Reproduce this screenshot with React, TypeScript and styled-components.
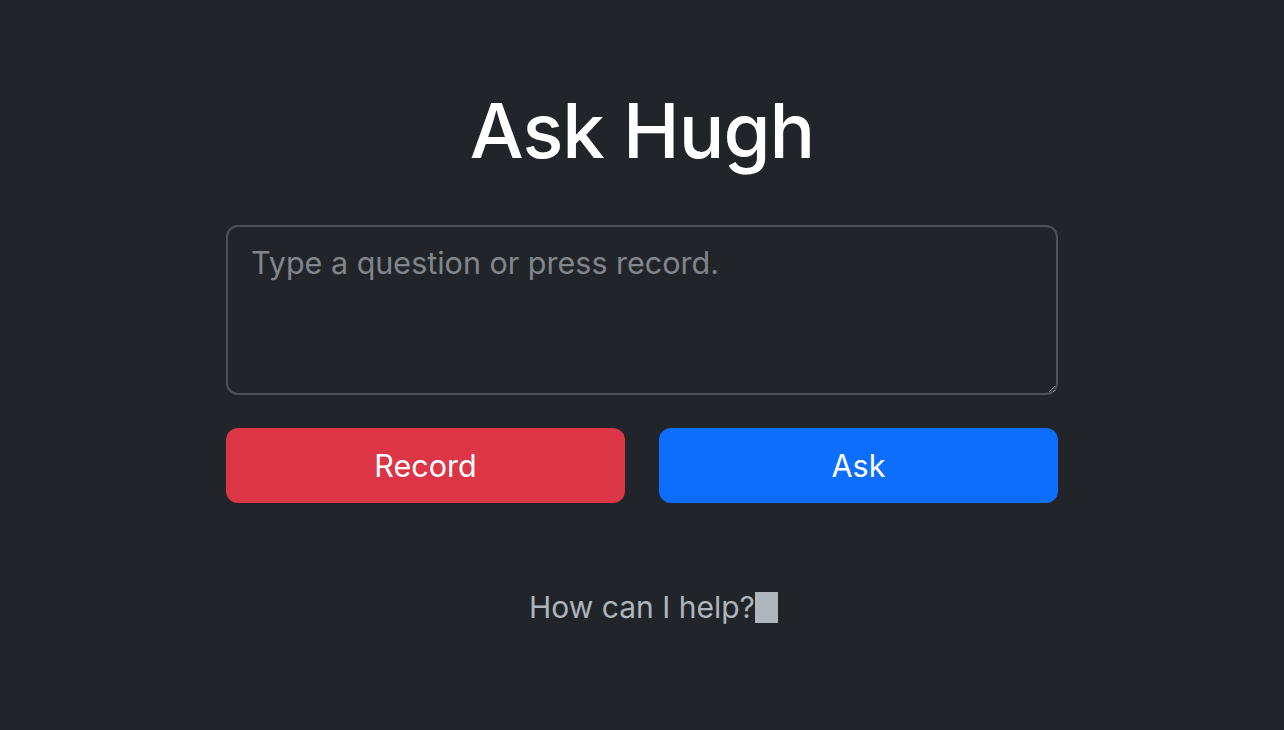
import styled, { createGlobalStyle } from "styled-components";
import React, { useState } from "react";

const GlobalStyle = createGlobalStyle`
  html, body {
    margin: 0;
    padding: 0;
    background: #212529;
  }
  body {
    font-family: Inter, "Noto Sans", "Liberation Sans", sans-serif;
    color: #ffffff;
  }
`;

const Page = styled.main`
  min-height: 730px;
  display: flex;
  flex-direction: column;
  align-items: center;
  padding-top: 82px;
  box-sizing: border-box;
`;

const Title = styled.h1`
  margin: 0;
  font-size: 76px;
  line-height: 96px;
  font-weight: 500;
  letter-spacing: -1px;
  color: #ffffff;
`;

const Form = styled.div`
  width: 832px;
  margin-top: 47px;
  display: flex;
  flex-direction: column;
  gap: 33px;
`;

const Question = styled.textarea`
  width: 100%;
  height: 170px;
  box-sizing: border-box;
  padding: 13px 23px;
  background: #212529;
  color: #dee2e6;
  color-scheme: dark;
  border: 2px solid #4c5258;
  border-radius: 12px;
  font-family: inherit;
  font-size: 30.5px;
  line-height: 1.5;
  resize: vertical;
  outline: none;
  &::placeholder {
    color: #80868c;
  }
`;

const ButtonRow = styled.div`
  display: grid;
  grid-template-columns: 1fr 1fr;
  gap: 34px;
`;

const ActionButton = styled.button<{ $tone: "danger" | "primary" }>`
  height: 75px;
  border: none;
  border-radius: 12px;
  background: ${(p) => (p.$tone === "danger" ? "#dc3545" : "#0d6efd")};
  color: #ffffff;
  font-family: inherit;
  font-size: 30.5px;
  font-weight: 400;
  cursor: pointer;
`;

const Answer = styled.p`
  margin: 82px 0 0;
  font-size: 30px;
  line-height: 45px;
  color: #adb5bd;
  display: flex;
  align-items: center;
`;

// blinking-style cursor that hangs past the centred text
const Cursor = styled.span`
  display: inline-block;
  width: 23px;
  height: 31px;
  margin-right: -23px;
  background: #adb5bd;
`;

const App = () => {
  const [question, setQuestion] = useState<string>("");
  return (
    <>
      <GlobalStyle />
      <Page>
        <Title>Ask Hugh</Title>
        <Form>
          <Question
            placeholder="Type a question or press record."
            value={question}
            onChange={(e) => {
              setQuestion(e.target.value);
            }}
          />
          <ButtonRow>
            <ActionButton $tone="danger">Record</ActionButton>
            <ActionButton $tone="primary">Ask</ActionButton>
          </ButtonRow>
        </Form>
        <Answer>
          How can I help?
          <Cursor />
        </Answer>
      </Page>
    </>
  );
};
export default App;
